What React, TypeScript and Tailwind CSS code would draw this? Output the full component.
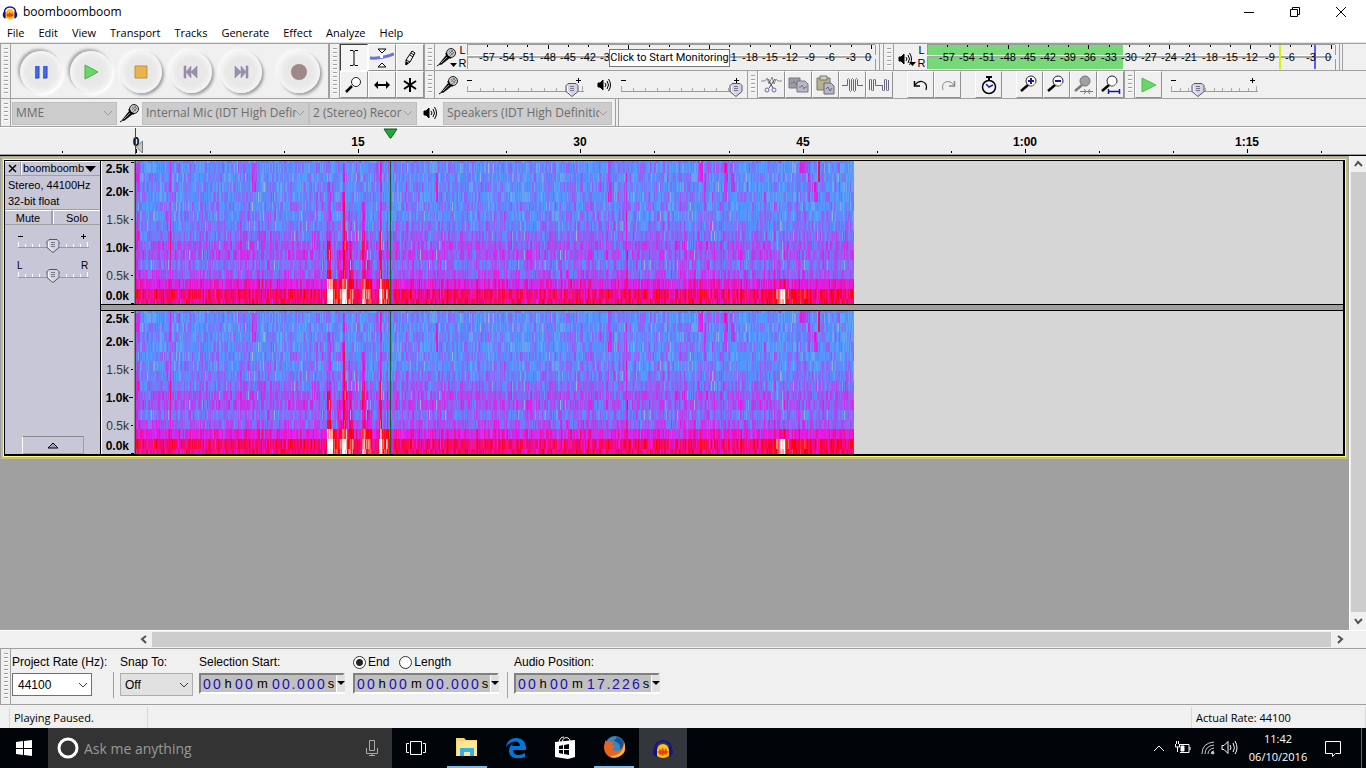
import React, { useMemo, useState } from 'react';

const DB_LABELS = Array.from({ length: 20 }, (_, i) => -57 + i * 3);
const MENUS = ['File', 'Edit', 'View', 'Transport', 'Tracks', 'Generate', 'Effect', 'Analyze', 'Help'];

// Spectrogram geometry: row edges in px and the average level of every band
const ROW_EDGES = [0, 2, 12, 21, 31, 41, 50, 60, 70, 80, 89, 99, 109, 118, 128, 138, 143];
const ROW_LEVELS = [0.29, 0.28, 0.28, 0.28, 0.28, 0.29, 0.29, 0.31, 0.34, 0.38, 0.39, 0.34, 0.38, 0.5, 0.63, 0.62];
const SPECTRUM_WIDTH = 718;

// x from, x to, first row, boost
const BURSTS = [
  [191, 197, 13, 0.4], [197, 206, 13, 0.2], [206, 211, 13, 0.36], [211, 218, 13, 0.2],
  [226, 230, 13, 0.32], [230, 236, 13, 0.18], [243, 246, 13, 0.34], [246, 253, 13, 0.18],
  [191, 195, 3, 0.1], [191, 195, 9, 0.16], [201, 206, 10, 0.14], [207, 209, 1, 0.2], [209, 212, 8, 0.22],
  [206, 209, 4, 0.14], [213, 216, 6, 0.12], [212, 218, 11, 0.14], [226, 229, 5, 0.2], [229, 232, 9, 0.16],
  [232, 236, 11, 0.15], [244, 246, 0, 0.18], [243, 246, 8, 0.16], [251, 252, 6, 0.2], [34, 35, 0, 0.18],
  [0, 4, 0, 0.1], [640, 653, 14, 0.12], [644, 649, 14, 0.1], [655, 672, 14, 0.06], [640, 650, 13, 0.08],
  [490, 491, 2, 0.16], [578, 579, 1, 0.1], [635, 720, 13, 0.02],
];

// x from, x to, first row, last row, boost: short streaks in the upper bands
const STREAKS = [
  [562, 567, 0, 2, 0.17], [568, 570, 2, 5, 0.2], [588, 592, 1, 4, 0.18], [595, 599, 1, 3, 0.14],
  [664, 674, 0, 1, 0.14], [682, 684, 0, 2, 0.36], [678, 682, 3, 4, 0.18], [300, 302, 2, 4, 0.24],
  [116, 120, 1, 3, 0.12], [472, 476, 0, 4, 0.12], [491, 492, 10, 12, 0.25], [672, 674, 2, 4, 0.2],
];

const noise = (x: number, y: number) => {
  let h = (x * 374761393 + y * 668265263) | 0;
  h = Math.imul(h ^ (h >>> 13), 1274126177);
  h = h ^ (h >>> 16);
  return (h >>> 0) / 4294967296;
};

const STOPS = [[192, 192, 192], [77, 153, 255], [230, 26, 230], [255, 0, 0], [255, 255, 255]];

const levelColor = (v: number) => {
  const p = Math.min(0.999, Math.max(0, v)) * 4;
  const i = Math.floor(p);
  const mix = STOPS[i].map((c, k) => Math.round(c + (STOPS[i + 1][k] - c) * (p - i)));
  return `rgb(${mix.join(',')})`;
};

const buildSpectrum = () => {
  const paths: Record<number, string> = {};
  for (let row = 0; row < 16; row++) {
    const y = ROW_EDGES[row];
    const h = ROW_EDGES[row + 1] - y;
    for (let x = 0; x < SPECTRUM_WIDTH; x++) {
      const n = (noise(x, row) + noise(x + 900, row) + noise(x >> 1, row + 40)) / 3 - 0.5;
      const slow = noise(x >> 2, row >> 1) - 0.5;
      let v = ROW_LEVELS[row] + n * 0.32 + slow * 0.05 + (noise(x, 99) - 0.5) * 0.05;
      BURSTS.forEach(([a, b, first, boost]) => {
        if (x >= a && x < b && row >= first && (first >= 13 || row < 13)) v += boost;
      });
      STREAKS.forEach(([a, b, first, last, boost]) => {
        if (x >= a && x < b && row >= first && row <= last) v += boost;
      });
      if (row < 13) v = Math.max(v, 0.19);
      // quiet spots show up as grey dashes
      if (row < 12 && noise(x + 300, row + 200) > 0.98) v = Math.min(v, 0.08 + noise(x, row + 300) * 0.1);
      const key = Math.round(Math.min(1, v) * 48);
      paths[key] = (paths[key] || '') + `M${x} ${y}h1v${h}h-1z`;
    }
  }
  return paths;
};

const Spectrogram = ({ paths }: { paths: Record<number, string> }) => (
  <svg width="719" height="143" shapeRendering="crispEdges" className="block shrink-0">
    <g transform="translate(1 0)">
      {Object.entries(paths).map(([key, d]) => (
        <path key={key} d={d} fill={levelColor(Number(key) / 48)} />
      ))}
    </g>
    <path d="M0 0h1v143H0zM255 0h1v143h-1z" fill="#1b5e2a" />
  </svg>
);

const FrequencyRuler = () => (
  <svg width="34" height="143" className="block shrink-0 bg-[#c8c7d7]" shapeRendering="crispEdges">
    <g fontFamily="'Liberation Sans', sans-serif" fontSize="12" textAnchor="end">
      <text x="28" y="12" fontWeight="bold">2.5k</text>
      <text x="28" y="35" fontWeight="bold">2.0k</text>
      <text x="28" y="63" fill="#333">1.5k</text>
      <text x="28" y="91" fontWeight="bold">1.0k</text>
      <text x="28" y="119" fill="#333">0.5k</text>
      <text x="28" y="139" fontWeight="bold">0.0k</text>
    </g>
    <path d="M30 1.5h3M28 30.5h4M30 58.5h2M28 86.5h4M30 114.5h2M30 142.5h3" stroke="#000" />
    <path d="M33.500 0V143" stroke="#8a8a90" />
    <path d="M.5 0V143" stroke="#fff" />
  </svg>
);

const Grabber = () => (
  <div className="flex w-[11px] shrink-0 justify-center self-stretch border-x border-[#a0a0a0] py-1">
    <div className="w-1 bg-[repeating-linear-gradient(to_bottom,#a0a0a0_0_1px,#fff_1px_2px,transparent_2px_4px)]" />
  </div>
);

const ToolButton = ({ label, active, children }: { label: string; active?: boolean; children: React.ReactNode }) => (
  <button
    aria-label={label}
    className={`flex w-[27px] shrink-0 items-center justify-center self-stretch border ${
      active
        ? 'border-t-[#404040] border-l-[#404040] border-r-white border-b-white bg-[#f5f5f5]'
        : 'border-t-white border-l-white border-r-[#909090] border-b-[#909090]'
    }`}
  >
    {children}
  </button>
);

const TransportButton = ({ label, pressed, children }: { label: string; pressed?: boolean; children: React.ReactNode }) => (
  <button
    aria-label={label}
    className={`flex size-[42px] shrink-0 items-center justify-center rounded-full bg-[#e8e8e8] ${
      pressed
        ? 'shadow-[-2px_-2px_3px_#a8a8a8,2px_2px_3px_#fff,inset_0_0_5px_3px_#f6f6f6]'
        : 'shadow-[2px_2px_3px_#a0a0a0,-2px_-2px_3px_#fafafa,inset_0_0_5px_3px_#f6f6f6]'
    }`}
  >
    <svg width="20" height="20" viewBox="0 0 20 20">{children}</svg>
  </button>
);

const Mic = () => (
  <svg width="20" height="20" viewBox="0 0 20 20" className="shrink-0">
    <path d="M0 19l3-2" stroke="#000" />
    <path d="M2 17L9 8l4 3-9 7z" fill="#111" />
    <path d="M4 16l6-6" stroke="#999" />
    <circle cx="14" cy="6" r="4.500" fill="#c4c4c4" stroke="#222" />
    <path d="M12 4l4 4M14 3l3 3M12 7l4-4M13 9l4-4" stroke="#666" strokeWidth=".7" />
    <path d="M9 6q1 4 5 5" stroke="#000" fill="none" strokeWidth="1.500" />
  </svg>
);

const Speaker = () => (
  <svg width="14" height="14" viewBox="0 0 14 14" fill="none" stroke="#000" className="shrink-0">
    <path d="M1 5h2l3-3v10L3 9H1z" fill="#000" />
    <path d="M8 5q2 2 0 4M10 3q3 4 0 8M11.500 1q4 6 0 12" />
  </svg>
);

const Lens = ({ sign, gray, mark }: { sign?: 'plus' | 'minus'; gray?: boolean; mark?: 'sel' | 'fit' }) => (
  <svg width="21" height="21" viewBox="0 0 21 21" fill="none">
    <path d="M9 11L2 17" stroke={gray ? '#777' : '#000'} strokeWidth="2.500" />
    <circle cx="12" cy="7" r="5" fill={gray ? '#a0a0a0' : '#fff'} stroke={gray ? '#777' : '#222'} />
    <path d="M9 10q4 4 8-1" stroke={gray ? '#888' : '#aaa'} />
    {sign && <path d={sign === 'plus' ? 'M12 4v6M9 7h6' : 'M9 7h6'} stroke="#1818a0" strokeWidth="2" />}
    {mark === 'sel' && <path d="M7 17.500h13M11 15l2 2.500-2 2.500M17 15l-2 2.500 2 2.500" stroke="#777" />}
    {mark === 'fit' && <path d="M8 17.500h12M8.500 15v5M19.500 15v5" stroke="#1818a0" strokeWidth="1.500" />}
  </svg>
);

interface SliderProps {
  label: string;
  start: number;
  width: number;
  ticks: number;
  low?: string;
  high?: string;
  light?: boolean;
}

const Slider = ({ label, start, width, ticks, low = '-', high = '+', light }: SliderProps) => {
  const [value, setValue] = useState(start);
  const x = Math.round(8 + (value / 100) * (width - 16));
  return (
    <div className="relative shrink-0">
      <svg width={width} height="26" className="block" fontFamily="'Liberation Sans', sans-serif" fontSize="10">
        <path d={`M5 19.500H${width - 4}`} stroke="#999" />
        {Array.from({ length: ticks }, (_, i) => {
          const tx = Math.round(5 + (i * (width - 11)) / (ticks - 1)) + 0.5;
          const long = i === 0 || i === ticks - 1;
          return <path key={i} d={`M${tx} ${long ? 14 : 16}V19`} stroke={light ? '#fff' : '#aaa'} />;
        })}
        {low === '-' ? <path d="M5 8.500h5" stroke="#000" /> : <text x="4" y="11">{low}</text>}
        {high === '+' ? (
          <path d={`M${width - 12} 8.500h5M${width - 9.5} 6v5`} stroke="#000" />
        ) : (
          <text x={width - 12} y="11">{high}</text>
        )}
        <path d={`M${x - 4} 11.500h8l2 2v6l-6 5-6-5v-6z`} fill="#d4d3e4" stroke="#55555f" />
        <path d={`M${x - 4.5} 14v5l4 4`} fill="none" stroke="#fff" />
        <path d={`M${x - 2} 14.500h4M${x - 2} 16.500h4M${x - 2} 18.500h4`} stroke="#77778a" />
      </svg>
      <input
        type="range"
        aria-label={label}
        value={value}
        onChange={(e) => setValue(Number(e.target.value))}
        className="absolute inset-0 w-full cursor-pointer appearance-none bg-transparent [&::-webkit-slider-thumb]:h-4 [&::-webkit-slider-thumb]:w-3 [&::-webkit-slider-thumb]:appearance-none"
      />
    </div>
  );
};

// labels between hideFrom and hideTo lie behind the hint and are left out
const Meter = ({ playing, hideFrom = 1, hideTo = 1 }: { playing?: boolean; hideFrom?: number; hideTo?: number }) => (
  <svg width="409" height="26" className="block shrink-0" shapeRendering="crispEdges">
    <rect width="405" height="26" fill="#efefef" />
    {playing && <rect width="196" height="25" fill="#77d877" />}
    <path d="M0 .5H408M.5 0V25" stroke="#999" />
    <path d="M0 11.500H405" stroke="#fff" />
    <path d="M0 12.500H405M0 13.500H405" stroke="#a8a8a8" />
    {playing && <path d="M353 1V25" stroke="#d8f010" strokeWidth="2" />}
    {playing && <path d="M388 1V25" stroke="#5b5bf5" strokeWidth="2" />}
    {DB_LABELS.map((db, i) => {
      const x = Math.round(20 + i * 20.2);
      return (
        <g key={db}>
          <path d={`M${x + 0.5} 1V${db % 12 === 0 ? 5 : 3}`} stroke="#000" />
          {(db < hideFrom || db > hideTo) && (
            <text x={db === 0 ? x - 3 : x} y="17" fontSize="11" textAnchor="middle" fontFamily="'Liberation Sans', sans-serif">
              {db}
            </text>
          )}
        </g>
      );
    })}
    <path d="M408.500 1V11M408.500 15V26" stroke="#999" />
  </svg>
);

const MeterSource = ({ label, children }: { label: string; children: React.ReactNode }) => (
  <button aria-label={label} className="flex w-8 shrink-0 items-center justify-end gap-px self-stretch">
    <span className="flex flex-col items-end">
      {children}
      <svg width="7" height="4" className="-mt-1 shrink-0"><path d="M0 0h7L3.500 4z" /></svg>
    </span>
    <span className="flex w-[9px] flex-col text-[11px] leading-[13px]">
      <span>L</span>
      <span>R</span>
    </span>
  </button>
);

const Chevron = ({ className }: { className: string }) => (
  <svg width="10" height="10" viewBox="0 0 10 10" fill="none" className={`pointer-events-none col-start-1 row-start-1 mr-1 self-center justify-self-end ${className}`}>
    <path d="M1 3l4 4 4-4" stroke="currentColor" />
  </svg>
);

const DeviceSelect = ({ label, value, width }: { label: string; value: string; width: string }) => (
  <div className={`grid shrink-0 ${width}`}>
    <select
      aria-label={label}
      disabled
      className="col-start-1 row-start-1 h-[23px] w-full appearance-none overflow-hidden border border-[#bfbfbf] bg-[#ccc] pr-3 pl-[3px] font-['Open_Sans','Noto_Sans',sans-serif] text-[12px] text-[#6d6d6d] opacity-100"
    >
      <option>{value}</option>
    </select>
    <Chevron className="text-[#999]" />
  </div>
);

const TimeField = ({ label, value }: { label: string; value: string }) => (
  <div role="group" aria-label={label} className="flex h-[21px] w-[146px] items-center border-2 border-t-[#808080] border-r-white border-b-white border-l-[#808080] bg-[#c0c0c0] pl-px text-[14px] leading-4">
    {value.split('').map((c, i) => {
      const size = c === 'h' ? 'w-3' : c === 'm' ? 'w-[17px]' : c === '.' ? 'w-[5px]' : 'w-[10px]';
      return (
        <span key={i} className={`flex shrink-0 justify-center ${size} ${/[hms]/.test(c) ? 'text-black text-[13px]' : 'text-[#1a10b8]'}`}>
          {c}
        </span>
      );
    })}
    <button aria-label={`${label} format`} className="ml-auto flex h-full w-[9px] items-center justify-center border-l border-white bg-[#e0e0e0]">
      <svg width="8" height="5"><path d="M0 0h8L4 4z" /></svg>
    </button>
  </div>
);

const AudacityLogo = ({ size }: { size: number }) => (
  <svg width={size} height={size} viewBox="0 0 22 22" className="shrink-0">
    <path d="M3 13C2 1 20 1 19 13" fill="none" stroke="#14148c" strokeWidth="2" />
    <path d="M5 13q1-6 6-6t6 6v6q-6 4-12 0z" fill="#ffc518" />
    <path d="M5 15l2-1 1-3 1 3 2-4 1 4 2-3 1 3 2 1-2 1-1 2-2-1-1 2-2-2-1 2-1-3z" fill="#f04010" />
    <path d="M5 10q-4 1-4 5t4 5zM17 10q4 1 4 5t-4 5z" fill="#14148c" />
  </svg>
);

const TimeRuler = () => (
  <svg width="100%" height="28" className="block shrink-0 border-t border-white bg-[#efefef]" shapeRendering="crispEdges">
    {Array.from({ length: 18 }, (_, i) => {
      const x = Math.round(136 + (i - 1) * 74.07);
      const major = (i - 1) % 3 === 0;
      const sec = (i - 1) * 5;
      return (
        <g key={i}>
          <path d={`M${x + 0.5} ${major ? 21 : 23}V25`} stroke="#000" />
          {major && (
            <text x={x} y="18" textAnchor="middle" fontSize="12" fontWeight="bold" fontFamily="'Liberation Sans', sans-serif">
              {sec < 60 ? sec : `1:${String(sec - 60).padStart(2, '0')}`}
            </text>
          )}
        </g>
      );
    })}
    <path d="M0 26.500H2000" stroke="#a0a0a0" />
    <path d="M135.500 0V26" stroke="#1b5e2a" />
    <path d="M142.500 13V25L136.500 19z" fill="#c8c8c8" stroke="#777" shapeRendering="auto" />
    <path d="M384 1h13l-6 9h-1z" fill="#1ea838" stroke="#146022" shapeRendering="auto" />
  </svg>
);

const Arrow = ({ d }: { d: string }) => (
  <svg width="9" height="9" viewBox="0 0 9 9" fill="none"><path d={d} stroke="#505050" strokeWidth="2" /></svg>
);

const App = () => {
  const spectrum = useMemo(buildSpectrum, []);
  const [endMode, setEndMode] = useState('end');

  return (
    <div className="flex h-screen w-full flex-col overflow-hidden bg-[#f0f0f0] font-['Liberation_Sans',Arial,sans-serif] text-[12px] text-black">
      {/* title bar */}
      <header className="flex h-[22px] shrink-0 items-center bg-white pt-px pl-[2px]">
        <AudacityLogo size={16} />
        <h1 className="ml-[5px] grow font-['Open_Sans','Noto_Sans',sans-serif] text-[12px]">boomboomboom</h1>
        <div className="flex gap-[35px] pr-[19px]">
          <button aria-label="Minimize"><svg width="11" height="12"><path d="M0 6.500h10" stroke="#000" /></svg></button>
          <button aria-label="Restore">
            <svg width="11" height="12" fill="none" stroke="#000"><path d="M.5 3.500h7v7h-7zM2.500 3V1.500h7v7H8" /></svg>
          </button>
          <button aria-label="Close"><svg width="11" height="12" stroke="#000"><path d="M0 1l10 10M10 1L0 11" /></svg></button>
        </div>
      </header>
      <nav className="flex h-[21px] shrink-0 items-center gap-[14px] border-b border-[#e4e4e4] bg-white pt-[2px] pl-[7px] font-['Open_Sans','Noto_Sans',sans-serif] text-[11px]">
        {MENUS.map((menu) => (
          <button key={menu}>{menu}</button>
        ))}
      </nav>

      {/* toolbars */}
      <div className="flex h-14 shrink-0 border-t border-b border-[#a0a0a0]">
        <Grabber />
        <div className="flex w-[318px] shrink-0 items-center gap-2 border-r border-[#a0a0a0] pt-px pl-[9px]">
          <TransportButton label="Pause" pressed>
            <path d="M4 4h4v12H4zM12 4h4v12h-4z" fill="#4068f0" />
            <path d="M8 4v12H4M16 4v12h-4" fill="none" stroke="#2848b0" />
          </TransportButton>
          <TransportButton label="Play" pressed>
            <path d="M4 3l13 7-13 7z" fill="#66d866" stroke="#50a850" />
          </TransportButton>
          <TransportButton label="Stop">
            <path d="M4 4h12v12H4z" fill="#e8b450" stroke="#c09038" />
          </TransportButton>
          <TransportButton label="Skip to Start">
            <path d="M3 4h2v12H3zM10 4v12l-5-6zM16 4v12l-6-6z" fill="#9a8fae" stroke="#8a809c" strokeWidth=".5" />
          </TransportButton>
          <TransportButton label="Skip to End">
            <path d="M15 4h2v12h-2zM4 4v12l6-6zM10 4v12l5-6z" fill="#9a8fae" stroke="#8a809c" strokeWidth=".5" />
          </TransportButton>
          <div className="pl-2">
            <TransportButton label="Record"><circle cx="10" cy="10" r="8" fill="#a08888" /></TransportButton>
          </div>
        </div>
        <Grabber />
        <div className="grid shrink-0 grid-cols-[28px_28px_28px] grid-rows-2 [&>button]:w-full">
          <ToolButton label="Selection Tool" active>
            <svg width="12" height="18" stroke="#000" fill="none"><path d="M2 1.500h3l1 1 1-1h3M6 2v14M2 16.500h3l1-1 1 1h3" /></svg>
          </ToolButton>
          <ToolButton label="Envelope Tool">
            <svg width="24" height="22" fill="none" className="shrink-0">
              <path d="M0 11q12 1 24-4" stroke="#6a72e0" strokeWidth="3" />
              <path d="M8 2h8l-4 4zM8 20h8l-4-4z" fill="#fff" stroke="#000" />
              <rect x="10" y="8" width="3" height="3" fill="#fff" />
            </svg>
          </ToolButton>
          <ToolButton label="Draw Tool">
            <svg width="14" height="18" fill="none" stroke="#000"><path d="M3 11L9 2l3 2-5 9-4 3zM3 11l4 2M8 4l3 2M7 6l3 2" /><path d="M3 13v3l2-2z" fill="#000" /></svg>
          </ToolButton>
          <ToolButton label="Zoom Tool">
            <svg width="18" height="18" fill="none"><path d="M7 10L1 16" stroke="#000" strokeWidth="2.500" /><circle cx="11" cy="6" r="4.500" fill="#fff" stroke="#222" /></svg>
          </ToolButton>
          <ToolButton label="Time Shift Tool">
            <svg width="18" height="10"><path d="M1 5l4-4v3h8V1l4 4-4 4V6H5v3z" /></svg>
          </ToolButton>
          <ToolButton label="Multi-Tool Mode">
            <svg width="14" height="16" stroke="#000" strokeWidth="2"><path d="M7 1v14M1 4l12 8M13 4L1 12" /></svg>
          </ToolButton>
        </div>
        <div className="flex min-w-0 grow flex-col">
          <div className="flex h-[27px] shrink-0 border-b border-[#a0a0a0]">
            <Grabber />
            <MeterSource label="Recording device"><Mic /></MeterSource>
            <div className="relative shrink-0">
              <Meter hideFrom={-36} hideTo={-24} />
              <div role="tooltip" className="absolute top-[5px] left-[142px] flex h-[18px] w-[121px] items-center justify-center border border-[#767676] bg-white font-[Roboto,'Noto_Sans',sans-serif] text-[11px] whitespace-nowrap">
                Click to Start Monitoring
              </div>
            </div>
            <div className="ml-[3px] w-1 shrink-0 border-l border-[#a0a0a0]" />
            <Grabber />
            <MeterSource label="Playback device"><span className="pt-[3px] pr-1"><Speaker /></span></MeterSource>
            <div className="w-px" />
            <Meter playing />
            <div className="ml-[3px] w-1 shrink-0 border-x border-[#a0a0a0]" />
          </div>
          <div className="flex h-[27px] shrink-0 items-center">
            <Grabber />
            <div className="flex w-[312px] shrink-0 items-center pl-1">
              <Mic />
              <div className="w-[3px]" />
              <Slider label="Recording Volume" start={93} width={126} ticks={10} />
              <div className="w-[9px]" />
              <Speaker />
              <div className="w-[5px]" />
              <Slider label="Playback Volume" start={98} width={130} ticks={11} />
            </div>
            <Grabber />
            <ToolButton label="Cut">
              <svg width="21" height="20" fill="none" stroke="#8a8a98"><path d="M0 6h4l2-3 2 6 3-7 2 7 2-5 2 2h4" /><path d="M7 4l5 9M14 4l-6 9" stroke="#555" /><circle cx="6" cy="15" r="2" stroke="#6868a8" /><circle cx="13" cy="15" r="2" stroke="#6868a8" /></svg>
            </ToolButton>
            <ToolButton label="Copy">
              <svg width="21" height="20" stroke="#777788"><path d="M1 3h11v10H1z" fill="#9c9ca4" /><path d="M9 6h8l3 3v8H9z" fill="#b8b8c8" /><path d="M3 8h2l1-2 2 4 1-2M11 12h2l1-2 2 4 1-2h2" fill="none" /></svg>
            </ToolButton>
            <ToolButton label="Paste">
              <svg width="21" height="20" stroke="#77776a"><path d="M2 3h13v12H2z" fill="#b8b488" /><path d="M5 1h7v4H5z" fill="#d0d0c8" /><path d="M9 8h7l3 3v8H9z" fill="#b8b8c8" stroke="#68687c" /><path d="M11 14l2-2 2 4 2-3" fill="none" stroke="#68687c" /></svg>
            </ToolButton>
            <ToolButton label="Trim">
              <svg width="21" height="16" fill="none" stroke="#65657c"><path d="M0 8.500h5.500V2.500q1-2 2 0v11q1 2 2 0v-11q1-2 2 0v11q1 2 2 0v-11q1-2 2 0v6H21" /></svg>
            </ToolButton>
            <ToolButton label="Silence">
              <svg width="21" height="16" fill="none" stroke="#65657c"><path d="M.5 13V3q1-2 2 0v10q1 2 2 0V3q1-2 2 0v5.500h7V13q1 2 2 0V3q1-2 2 0v10q1 2 2 0V3" /></svg>
            </ToolButton>
            <div className="w-[14px]" />
            <ToolButton label="Undo">
              <svg width="16" height="14" fill="none" stroke="#000"><path d="M2 7q3-4 7-3.500 6 1.500 4 8.500" strokeWidth="1.200" /><path d="M1.500 3v5H7" strokeWidth="1.500" /></svg>
            </ToolButton>
            <ToolButton label="Redo">
              <svg width="16" height="14" fill="none" stroke="#888"><path d="M14 7q-3-4-7-3.500Q1 5 3 12" /><path d="M14.500 3v5H9" strokeWidth="1.500" /></svg>
            </ToolButton>
            <div className="w-[14px]" />
            <ToolButton label="Sync-Lock">
              <svg width="18" height="20" fill="none"><circle cx="9" cy="12" r="6.500" fill="#f4f4ff" stroke="#000" strokeWidth="1.500" /><path d="M9 1v4M6 2h6" stroke="#000" strokeWidth="2" /><path d="M6 9l3 3 4-2" stroke="#2020a0" strokeWidth="1.500" /></svg>
            </ToolButton>
            <div className="w-[14px]" />
            <ToolButton label="Zoom In"><Lens sign="plus" /></ToolButton>
            <ToolButton label="Zoom Out"><Lens sign="minus" /></ToolButton>
            <ToolButton label="Fit Selection"><Lens gray mark="sel" /></ToolButton>
            <ToolButton label="Fit Project"><Lens mark="fit" /></ToolButton>
            <Grabber />
            <ToolButton label="Play-at-speed">
              <svg width="16" height="16"><path d="M1 1l14 7-14 7z" fill="#66d866" stroke="#58b858" /></svg>
            </ToolButton>
            <div className="w-1" />
            <Slider label="Playback Speed" start={30} width={96} ticks={11} />
          </div>
        </div>
      </div>

      {/* device toolbar */}
      <div className="flex h-[28px] shrink-0 items-center border-b border-[#a0a0a0]">
        <Grabber />
        <div className="flex items-center pt-px pl-px">
          <DeviceSelect label="Audio Host" value="MME" width="w-[105px]" />
          <div className="flex w-[25px] justify-center"><Mic /></div>
          <DeviceSelect label="Recording Device" value="Internal Mic (IDT High Defir" width="w-[167px]" />
          <DeviceSelect label="Recording Channels" value="2 (Stereo) Recor" width="w-[108px]" />
          <div className="flex w-[26px] justify-center"><Speaker /></div>
          <DeviceSelect label="Playback Device" value="Speakers (IDT High Definitic" width="w-[169px]" />
        </div>
        <div className="ml-[3px] w-1 self-stretch border-x border-[#a0a0a0]" />
      </div>

      <TimeRuler />

      {/* track area */}
      <main className="flex min-h-0 grow border-t border-black">
        <div className="min-w-0 grow bg-[#a0a0a0] pt-px pr-px pl-px">
          <div className="bg-[#c0bd82] p-[2px]">
            <div className="flex border border-[#ffff70]">
              <div className="flex grow border border-r-2 border-b-2 border-black bg-[#a0a0a0]">
                <section className="flex w-24 shrink-0 flex-col border-r border-black bg-[#c8c7d7]">
                  <div className="flex h-[15px] border-b border-[#a0a0a0]">
                    <button aria-label="Close track" className="flex w-4 items-center justify-center border-t border-r border-t-white border-r-[#a0a0a0]">
                      <svg width="9" height="9" stroke="#000" strokeWidth="1.500"><path d="M1 1l7 7M8 1L1 8" /></svg>
                    </button>
                    <button className="flex grow items-center justify-between border-t border-l border-white pr-1 pl-px text-[11px]">
                      boomboomb
                      <svg width="11" height="6"><path d="M0 0h11L5.500 6z" /></svg>
                    </button>
                  </div>
                  <p className="pt-px pl-[3px] text-[11px] leading-4 whitespace-nowrap">Stereo, 44100Hz<br />32-bit float</p>
                  <div className="flex h-4 border-t border-b border-[#a0a0a0] text-[11px]">
                    <button className="flex-1 border-t border-r-2 border-t-white border-r-[#a0a0a0] leading-3">Mute</button>
                    <button className="flex-1 border-t border-l border-white leading-3">Solo</button>
                  </div>
                  <div className="flex flex-col items-center gap-1 pt-[3px]">
                    <Slider label="Gain" start={50} width={80} ticks={11} light />
                    <Slider label="Pan" start={50} width={80} ticks={11} low="L" high="R" light />
                  </div>
                  <button aria-label="Collapse track" className="mx-auto mt-auto flex h-[18px] w-[62px] items-center justify-center border border-t-[#888] border-r-[#a0a0a0] border-b-[#a0a0a0] border-l-white">
                    <svg width="12" height="7"><path d="M1 6h10L6 1z" fill="#a0a0b8" stroke="#000" /></svg>
                  </button>
                </section>
                <div className="min-w-0 grow">
                  {['left', 'right'].map((channel) => (
                    <div
                      key={channel}
                      className={`flex bg-[#d6d6d6] ${channel === 'left' ? 'mb-[5px] border-b border-black' : 'border-t border-black'}`}
                    >
                      <FrequencyRuler />
                      <Spectrogram paths={spectrum} />
                    </div>
                  ))}
                </div>
              </div>
            </div>
          </div>
        </div>
        <div className="flex w-[17px] shrink-0 flex-col items-center border-l border-white bg-[#f0f0f0]">
          <button aria-label="Scroll up" className="flex h-4 items-center"><Arrow d="M1 6l3-4 4 4" /></button>
          <div className="w-[15px] grow bg-[#cdcdcd]" />
          <button aria-label="Scroll down" className="flex h-[18px] items-center"><Arrow d="M1 2l3 4 4-4" /></button>
        </div>
      </main>
      <div className="flex h-[18px] shrink-0 items-center border-t border-white pr-[17px] pb-px pl-[136px]">
        <button aria-label="Scroll left" className="flex w-4 justify-center"><Arrow d="M6 1L2 4l4 4" /></button>
        <div className="h-[15px] grow bg-[#cdcdcd]" />
        <button aria-label="Scroll right" className="flex w-[18px] justify-center"><Arrow d="M2 1l4 3-4 4" /></button>
      </div>

      {/* selection bar */}
      <div className="flex h-[57px] shrink-0 border-t border-b border-[#a0a0a0]">
        <Grabber />
        <div className="flex items-start gap-2 pt-[5px] pl-px">
          <div className="flex w-[100px] flex-col gap-[3px]">
            <label htmlFor="rate" className="leading-4 whitespace-nowrap">Project Rate (Hz):</label>
            <div className="grid w-20">
              <select id="rate" className="col-start-1 row-start-1 h-[23px] appearance-none border border-[#707070] bg-white pl-[5px]">
                <option>44100</option>
              </select>
              <Chevron className="text-[#404040]" />
            </div>
          </div>
          <div className="mt-[18px] -ml-[7px] h-[26px] w-px bg-[#a0a0a0]" />
          <div className="-ml-[2px] flex w-[73px] flex-col gap-[3px]">
            <label htmlFor="snap" className="leading-4">Snap To:</label>
            <div className="grid">
              <select id="snap" className="col-start-1 row-start-1 h-[23px] appearance-none border border-[#adadad] bg-[#e1e1e1] pl-1">
                <option>Off</option>
              </select>
              <Chevron className="text-[#404040]" />
            </div>
          </div>
          <div className="-ml-[2px] flex flex-col gap-[3px]">
            <span className="leading-4">Selection Start:</span>
            <TimeField label="Selection Start" value="00h00m00.000s" />
          </div>
          <div className="flex flex-col gap-[3px]">
            <div className="flex gap-[10px] leading-4">
              {['End', 'Length'].map((mode) => (
                <label key={mode} className="flex items-center gap-[2px]">
                  <input
                    type="radio"
                    name="end-mode"
                    checked={endMode === mode.toLowerCase()}
                    onChange={() => setEndMode(mode.toLowerCase())}
                    className="size-[13px] appearance-none rounded-full border border-[#333] bg-white checked:bg-[radial-gradient(circle,#222_0_3px,#fff_4px)]"
                  />
                  {mode}
                </label>
              ))}
            </div>
            <TimeField label="Selection End" value="00h00m00.000s" />
          </div>
          <div className="mt-[18px] h-[26px] w-px bg-[#a0a0a0]" />
          <div className="-ml-[2px] flex flex-col gap-[3px]">
            <span className="leading-4">Audio Position:</span>
            <TimeField label="Audio Position" value="00h00m17.226s" />
          </div>
        </div>
      </div>

      <footer className="flex h-[23px] shrink-0 items-center pt-[2px] pl-[9px] font-['Open_Sans','Noto_Sans',sans-serif] text-[11px]">
        <div className="flex h-full w-[139px] items-center border-x border-[#d7d7d7] pt-px pl-1">Playing Paused.</div>
        <div className="grow" />
        <div className="flex h-full w-[175px] items-center border-x border-[#d7d7d7] pt-px pl-1">Actual Rate: 44100</div>
      </footer>

      {/* Windows taskbar */}
      <div className="flex h-10 shrink-0 bg-[#010409] font-['Open_Sans','Noto_Sans',sans-serif] text-white">
        <button aria-label="Start" className="flex w-12 items-center justify-center">
          <svg width="16" height="16" fill="#fff"><path d="M0 2l7-1v7H0zM8 1l8-1v8H8zM0 9h7v6l-7-1zM8 9h8v7l-8-1z" /></svg>
        </button>
        <div className="flex w-[344px] items-center bg-[#333] pr-3 pl-[9px]">
          <svg width="22" height="22" fill="none" className="shrink-0"><circle cx="11" cy="11" r="9" stroke="#fff" strokeWidth="3" /></svg>
          <input aria-label="Search" placeholder="Ask me anything" className="ml-[5px] min-w-0 grow bg-transparent text-[14px] placeholder:text-[#999]" />
          <svg width="16" height="18" fill="none" stroke="#aaa"><path d="M5.500 1.500h5v10h-5zM2.500 9v5.500h11V9M8 14v3M5 16.500h6" /></svg>
        </div>
        <button aria-label="Task View" className="flex w-12 items-center justify-center">
          <svg width="20" height="14" fill="none" stroke="#fff"><path d="M4.500 .5h11v13h-11zM3 2.500H.5v9H3M17 2.500h2.500v9H17" /></svg>
        </button>
        <button aria-label="File Explorer" className="ml-[7px] flex w-10 items-center justify-center border-b-2 border-[#76b9ed]">
          <svg width="22" height="20"><path d="M0 1h8l2 2h11v16H0z" fill="#f6d672" /><path d="M1 4h20v15H1z" fill="#ffe694" /><path d="M4 19v-8h14v8h-4v-4H8v4z" fill="#36aee8" /></svg>
        </button>
        <button aria-label="Edge" className="ml-[5px] flex w-12 items-center justify-center">
          <svg width="20" height="22" viewBox="0 0 20 22"><path d="M0 10C1 4 5 1 10 1c6 0 10 4 10 10v2H7c0 6 7 6 12 3v4c-7 3-16 1-16-6 0-4 2-6 5-8-2 1-2 3-2 3h8c0-6-9-6-14 1z" fill="#0078d7" /></svg>
        </button>
        <button aria-label="Store" className="flex w-[50px] items-center justify-center">
          <svg width="22" height="24"><path d="M1 6l20-2v17l-7 2-13-2z" fill="#fff" /><path d="M5 6q1-5 5-5M8 6q2-6 6-4 2 1 2 3" fill="none" stroke="#fff" /><path d="M5 10l4-1v4H5zM10 9l5-1v5h-5zM5 14h4v4l-4-1zM10 14h5v5l-5-1z" fill="#010409" /></svg>
        </button>
        <button aria-label="Firefox" className="ml-1 flex w-10 items-center justify-center border-b-2 border-[#76b9ed]">
          <svg width="24" height="24" viewBox="0 0 24 24">
            <circle cx="13" cy="11" r="10" fill="#3a86c4" />
            <path d="M15 2q7 2 7 9 0 6-6 8 4-6 1-10-3-3-5-3z" fill="#1e4e88" />
            <path d="M3 5l2 2 3-1 3 1-1 3 3 2-3 2q2 3 6 2 5-2 6-8 3 8-2 12-7 6-14 1-6-5-3-14z" fill="#e86420" />
            <path d="M22 7q3 9-3 13-5 4-11 1 7 0 11-4 3-4 3-10z" fill="#f8c030" />
          </svg>
        </button>
        <button aria-label="Audacity" className="ml-[5px] flex w-12 items-center justify-center bg-[#33373c]">
          <AudacityLogo size={22} />
        </button>
        <div className="grow" />
        <div className="flex items-center">
          <svg width="12" height="8" fill="none" stroke="#fff"><path d="M1 7l5-5 5 5" /></svg>
          <svg width="17" height="14" fill="none" stroke="#fff" className="ml-[9px]"><path d="M6 3.500h9v8H6M16 6v3M1.500 3v3h4V3M2.500 0v3M4.500 0v3M3.500 6v5" /><path d="M7 5h3v5H7z" fill="#fff" /></svg>
          <svg width="14" height="14" fill="none" stroke="#ccc" className="ml-[10px]"><path d="M1 13Q1 2 13 1M4 13q0-8 9-9M7 13q0-5 6-6M10 13q0-3 3-3" /><circle cx="12" cy="12" r="1" fill="#fff" /></svg>
          <svg width="18" height="16" fill="none" stroke="#fff" className="ml-[6px]"><path d="M1 5.500h2l4-4v12l-4-4H1zM9 5q2 3 0 5M12 3q3 5 0 9M14 1q4 7 0 13" /></svg>
          <time className="ml-2 w-[62px] text-center text-[11px] leading-[18px]">11:42<br />06/10/2016</time>
          <svg width="18" height="17" fill="none" stroke="#fff" className="ml-[15px]"><path d="M1.500 1.500h15v12h-5l-3 3v-3h-7z" /></svg>
          <div className="ml-[19px] h-10 w-[5px] border-l border-[#666]" />
        </div>
      </div>
    </div>
  );
};

export default App;
